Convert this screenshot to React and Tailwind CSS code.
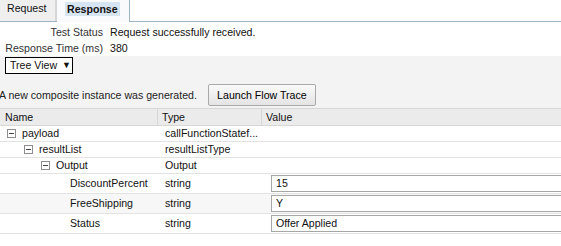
import React from "react";

function Minus() {
  return (
    <span className="inline-flex w-[9px] h-[9px] border border-[#8e8e8e] bg-white items-center justify-center mr-[6px] shrink-0">
      <span className="block w-[5px] h-px bg-[#444]"></span>
    </span>
  );
}

function TreeRow({ indent, label, type, value, shaded, icon }) {
  const h = value !== undefined ? "h-[20px]" : "h-[16px]";
  return (
    <div className={`grid grid-cols-[158px_104px_1fr] ${h} border-b border-[#e3e3e3] ${shaded ? "bg-[#f7f7f7]" : "bg-white"}`}>
      <div className="flex items-center" style={{ paddingLeft: indent }}>
        {icon && <Minus />}
        <span className="whitespace-nowrap">{label}</span>
      </div>
      <div className="flex items-center pl-[7px] whitespace-nowrap">{type}</div>
      <div className="flex items-center pl-[9px]">
        {value !== undefined && (
          <div className="h-[17px] w-[300px] border border-[#a7a7a7] bg-white flex items-center pl-[4px]">
            {value}
          </div>
        )}
      </div>
    </div>
  );
}

export default function App() {
  return (
    <div className="w-[561px] h-[246px] overflow-hidden bg-white text-[10.6px] leading-none text-[#111]" style={{ fontFamily: '"Liberation Sans", Arial, sans-serif' }}>
      {/* Tabs */}
      <div className="flex h-[22px] border-b border-[#9fb4c3]">
        <div className="w-[57px] bg-[#efefef] flex items-center pl-[7px] pb-[4px] border-r-2 border-[#d6d6d6]">Request</div>
        <div className="w-[73px] bg-[#f8fafb] flex items-center pl-[8px] pb-[4px] border-r border-[#9fb4c3] -mb-px">
          <span className="font-bold bg-[#d7e4f1] px-[2px] py-[2px]">Response</span>
        </div>
      </div>
      {/* Info */}
      <div className="h-[34px] pt-[2px]">
        <div className="flex h-[16px] items-center">
          <div className="w-[103px] text-right text-[#333]">Test Status</div>
          <div className="pl-[7px]">Request successfully received.</div>
        </div>
        <div className="flex h-[16px] items-center">
          <div className="w-[103px] text-right text-[#333]">Response Time (ms)</div>
          <div className="pl-[7px]">380</div>
        </div>
      </div>
      {/* Gray toolbar */}
      <div className="h-[52px] bg-[#f3f3f3] pt-[1px]">
        <div className="ml-[5px] w-[68px] h-[17px] border border-black bg-white flex items-center pl-[4px] whitespace-nowrap">
          <span>Tree View</span>
          <span className="ml-[5px] text-[9px]">▼</span>
        </div>
        <div className="flex items-center mt-[10px] h-[22px]">
          <span className="-ml-[1px] text-[#222] whitespace-nowrap">A new composite instance was generated.</span>
          <button className="ml-[11px] w-[108px] h-[22px] border border-[#a9a9a9] rounded-[2px] bg-gradient-to-b from-[#fafafa] to-[#e4e4e4] text-[10.6px] text-black whitespace-nowrap">
            Launch Flow Trace
          </button>
        </div>
      </div>
      {/* Table header */}
      <div className="grid grid-cols-[158px_104px_1fr] h-[18px] border-y border-[#d7d7d7] bg-[#ebebeb]">
        <div className="flex items-center pl-[5px] border-r border-[#d7d7d7]">Name</div>
        <div className="flex items-center pl-[4px] border-r border-[#d7d7d7]">Type</div>
        <div className="flex items-center pl-[4px]">Value</div>
      </div>
      <TreeRow indent={7} icon label="payload" type="callFunctionStatef..." />
      <TreeRow indent={24} icon label="resultList" type="resultListType" />
      <TreeRow indent={41} icon label="Output" type="Output" />
      <TreeRow indent={70} label="DiscountPercent" type="string" value="15" />
      <TreeRow indent={70} label="FreeShipping" type="string" value="Y" shaded />
      <TreeRow indent={70} label="Status" type="string" value="Offer Applied" />
    </div>
  );
}
